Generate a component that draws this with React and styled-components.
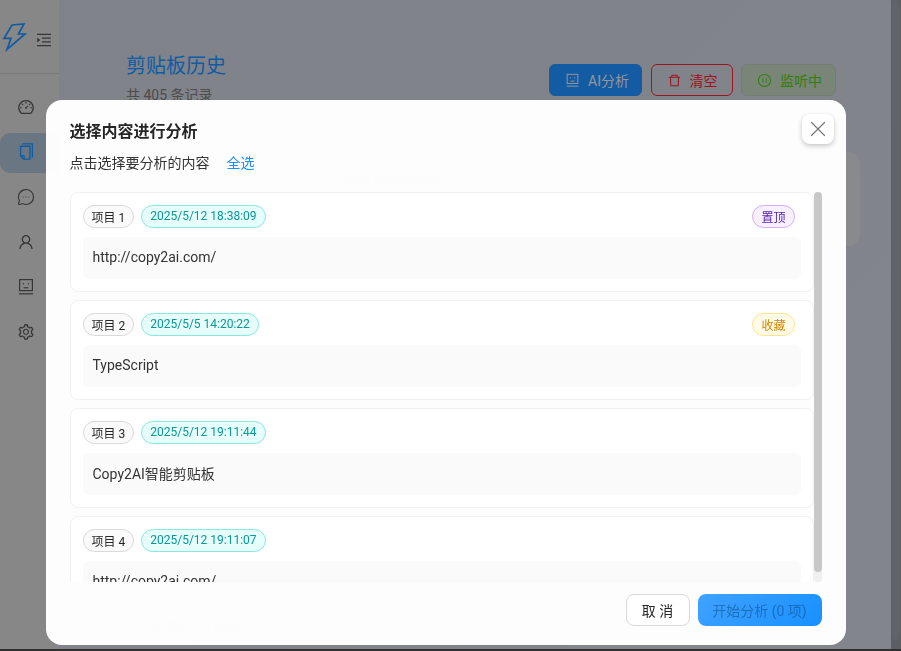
import React from 'react'
import styled, { createGlobalStyle } from 'styled-components'
import {
  AiOutlineMenuUnfold,
  AiOutlineDashboard,
  AiOutlineCopy,
  AiOutlineUser,
  AiOutlineSetting,
  AiOutlineDelete,
  AiOutlinePauseCircle,
  AiOutlineClockCircle,
} from 'react-icons/ai'
import { MessageCircleMore, X } from 'lucide-react'

const Global = createGlobalStyle`
  html, body { margin: 0; padding: 0; height: 100%; overflow: hidden; background: #4a4a4a; }
  body { font-family: Roboto, "Noto Sans CJK SC", sans-serif; }
  * { box-sizing: border-box; }
`

const FaceBox = ({ size = 18 }) => (
  <svg width={size} height={size} viewBox="0 0 18 18" fill="none" stroke="currentColor" strokeWidth="1.2">
    <rect x="2.6" y="1.6" width="12.8" height="11" />
    <path d="M2 15.8h14" />
    <path d="M6.6 9.8h4.8" />
    <circle cx="6.4" cy="5.8" r=".7" fill="currentColor" stroke="none" />
    <circle cx="11.6" cy="5.8" r=".7" fill="currentColor" stroke="none" />
  </svg>
)

const BoltLogo = () => (
  <svg width="28" height="30" viewBox="0 0 28 30" fill="none" stroke="currentColor" strokeWidth="1.7" strokeLinejoin="miter">
    <path d="M12 3 24 2 18.4 12H25L7 27.4 11 16.4H4Z" />
  </svg>
)

const navItems = [
  { key: 'dash', icon: <AiOutlineDashboard size={18} /> },
  { key: 'copy', icon: <AiOutlineCopy size={19} />, active: true },
  { key: 'msg', icon: <MessageCircleMore size={18} strokeWidth={1.5} /> },
  { key: 'user', icon: <AiOutlineUser size={18} /> },
  { key: 'bot', icon: <FaceBox size={18} /> },
  { key: 'set', icon: <AiOutlineSetting size={18} /> },
]

const records = [
  { id: 1, time: '2025/5/12 18:38:09', text: 'http://copy2ai.com/', flag: '置顶', tone: 'purple' },
  { id: 2, time: '2025/5/5 14:20:22', text: 'TypeScript', flag: '收藏', tone: 'gold' },
  { id: 3, time: '2025/5/12 19:11:44', text: 'Copy2AI智能剪贴板' },
  { id: 4, time: '2025/5/12 19:11:07', text: 'http://copy2ai.com/' },
]

const App = () => {
  return (
    <>
      <Global />
      <Shell>
        <Sidebar>
          <Brand>
            <Bolt><BoltLogo /></Bolt>
            <Fold><AiOutlineMenuUnfold size={18} /></Fold>
          </Brand>
          <Nav>
            {navItems.map((item) => (
              <NavItem key={item.key} $active={item.active}>{item.icon}</NavItem>
            ))}
          </Nav>
        </Sidebar>
        <Main>
          <TopBar>
            <div>
              <PageTitle>剪贴板历史</PageTitle>
              <PageSub>共 405 条记录</PageSub>
            </div>
            <Actions>
              <ActionButton $tone="primary"><FaceBox size={15} />AI分析</ActionButton>
              <ActionButton $tone="danger"><AiOutlineDelete size={15} />清空</ActionButton>
              <ActionButton $tone="success"><AiOutlinePauseCircle size={15} />监听中</ActionButton>
            </Actions>
          </TopBar>
          <SearchCard>搜索剪贴板内容...</SearchCard>
          <HistoryCard>
            <AiOutlineClockCircle size={13} />
            05.12 18:43
          </HistoryCard>
        </Main>
        <PageBar><PageThumb /></PageBar>
      </Shell>
      <Mask>
        <Modal>
          <CloseButton><X size={26} strokeWidth={1.1} /></CloseButton>
          <ModalTitle>选择内容进行分析</ModalTitle>
          <Hint>
            点击选择要分析的内容
            <SelectAll>全选</SelectAll>
          </Hint>
          <ListWrap>
            <List>
              {records.map((r) => (
                <Item key={r.id}>
                  <ItemHead>
                    <Tag>项目 {r.id}</Tag>
                    <Tag $tone="cyan">{r.time}</Tag>
                    {r.flag && <FlagTag $tone={r.tone}>{r.flag}</FlagTag>}
                  </ItemHead>
                  <ItemBody>{r.text}</ItemBody>
                </Item>
              ))}
            </List>
            <ListBar><ListThumb /></ListBar>
          </ListWrap>
          <Footer>
            <CancelButton>取 消</CancelButton>
            <StartButton>开始分析 (0 项)</StartButton>
          </Footer>
        </Modal>
      </Mask>
    </>
  )
}

export default App

const Shell = styled.div`
  height: 649px;
  display: flex;
  overflow: hidden;
  background: linear-gradient(135deg, #c8ccd6, #ccd1db);
`
const PageBar = styled.div`
  width: 10px;
  flex-shrink: 0;
  background: #8f949c;
  padding: 0 1px;
`
const PageThumb = styled.div`
  height: 640px;
  border-radius: 4px;
  background: #979ba3;
`
const Sidebar = styled.aside`
  width: 59px;
  flex-shrink: 0;
  background: #d3d3d3;
`
const Brand = styled.div`
  height: 74px;
  border-bottom: 1px solid #bebebe;
  display: flex;
  align-items: center;
`
const Bolt = styled.span`
  display: flex;
  color: #1890ff;
`
const Fold = styled.span`
  display: flex;
  color: #555;
  margin: 6px 0 0 7px;
`
const Nav = styled.nav`
  display: flex;
  flex-direction: column;
  gap: 5px;
  padding-top: 13px;
`
const NavItem = styled.div`
  height: 40px;
  display: flex;
  align-items: center;
  padding-left: 17px;
  border-radius: 10px 0 0 10px;
  color: ${(p) => (p.$active ? '#1890ff' : '#555')};
  background: ${(p) => (p.$active ? '#a6b9cb' : 'transparent')};
  ${(p) => p.$active && 'margin: 1px 0 -1px; padding-bottom: 4px;'}
`
const Main = styled.main`
  flex: 1;
  min-width: 0;
  padding: 0 0 0 42px;
`
const TopBar = styled.header`
  display: flex;
  justify-content: space-between;
  align-items: flex-start;
  padding: 52px 55px 0 25px;
  height: 152px;
`
const PageTitle = styled.h1`
  margin: 0;
  font-size: 20px;
  line-height: 28px;
  font-weight: 400;
  color: #1890ff;
`
const PageSub = styled.div`
  margin-top: 5px;
  font-size: 14px;
  line-height: 20px;
  color: #777;
`
const Actions = styled.div`
  display: flex;
  gap: 8.5px;
  margin-top: 12px;
`
const toneStyles = {
  primary: 'background:#1e90ff;color:#e4e8ee;border-color:#1e90ff;padding-right:12px;',
  danger: 'background:transparent;color:#f5222d;border-color:#f5222d;padding-right:14px;',
  success: 'background:#bcd0bb;color:#52c41a;border-color:#b4c6b4;',
}
const ActionButton = styled.button`
  height: 32px;
  padding: 0 13px 0 15px;
  display: flex;
  align-items: center;
  gap: 8px;
  border: 1px solid;
  border-radius: 6px;
  font: 400 14px Roboto, "Noto Sans CJK SC", sans-serif;
  ${(p) => toneStyles[p.$tone]}
`
const SearchCard = styled.div`
  width: 759px;
  height: 94px;
  padding: 18px 0 0 244px;
  border-radius: 12px;
  background: #d5d8df;
  font-size: 14px;
  color: #888;
`
const HistoryCard = styled.div`
  display: flex;
  align-items: flex-end;
  gap: 6px;
  width: 759px;
  height: 380px;
  margin-top: 8px;
  padding: 0 0 0 46px;
  font-size: 14px;
  color: #888;
`
const Mask = styled.div`
  position: fixed;
  inset: 0;
  padding: 100px 10px 0 0;
  display: flex;
  justify-content: center;
  align-items: flex-start;
  background: rgba(0, 0, 0, 0.36);
  backdrop-filter: blur(0.4px);
`
const Modal = styled.div`
  position: relative;
  width: 800px;
  height: 545px;
  padding: 20px 24px 0;
  border-radius: 16px;
  background: rgba(255, 255, 255, 0.98);
`
const CloseButton = styled.button`
  position: absolute;
  top: 14px;
  right: 12px;
  width: 32px;
  height: 30px;
  padding: 0;
  display: flex;
  align-items: center;
  justify-content: center;
  border: none;
  border-radius: 8px;
  background: #fff;
  color: #777;
  box-shadow: 0 2px 5px rgba(0, 0, 0, 0.22);
`
const ModalTitle = styled.h2`
  margin: 0;
  font-size: 16px;
  line-height: 24px;
  font-weight: 600;
  color: #262626;
`
const Hint = styled.div`
  margin-top: 8px;
  font-size: 14px;
  line-height: 22px;
  color: #333;
`
const SelectAll = styled.a`
  margin-left: 17px;
  color: #1890ff;
`
const ListWrap = styled.div`
  margin-top: 18px;
  height: 390px;
  display: flex;
`
const List = styled.div`
  flex: 1;
  min-width: 0;
  display: flex;
  flex-direction: column;
  gap: 8px;
  overflow: hidden;
`
const ListBar = styled.div`
  width: 8px;
  flex-shrink: 0;
  border-radius: 4px;
  background: #f0f0f0;
`
const ListThumb = styled.div`
  height: 380px;
  border-radius: 4px;
  background: #c8c8c8;
`
const Item = styled.div`
  flex-shrink: 0;
  height: 100px;
  padding: 12px;
  border: 1px solid #f0f0f0;
  border-radius: 8px;
  background: #fff;
`
const tagTones = {
  cyan: 'background:#e6fffb;border-color:#87e8de;color:#08979c;',
  purple: 'background:#f9f0ff;border-color:#d3adf7;color:#531dab;',
  gold: 'background:#fffbe6;border-color:#ffe58f;color:#d48806;',
}
const ItemHead = styled.div`
  display: flex;
  gap: 7px;
`
const Tag = styled.span`
  height: 23px;
  padding: 0 8px 1px;
  display: flex;
  align-items: center;
  border: 1px solid #d9d9d9;
  border-radius: 12px;
  background: #fafafa;
  font-size: 12px;
  color: #262626;
  ${(p) => tagTones[p.$tone]}
`
const FlagTag = styled(Tag)`
  margin: 0 6px 0 auto;
`
const ItemBody = styled.div`
  margin-top: 9px;
  height: 42px;
  padding: 0 10px 2px;
  display: flex;
  align-items: center;
  border-radius: 6px;
  background: #fafafa;
  font-size: 14px;
  color: #333;
`
const Footer = styled.div`
  display: flex;
  justify-content: flex-end;
  gap: 8px;
  margin-top: 12px;
`
const CancelButton = styled.button`
  width: 64px;
  height: 32px;
  border: 1px solid #d9d9d9;
  border-radius: 8px;
  background: #fff;
  font: 14px Roboto, "Noto Sans CJK SC", sans-serif;
  color: #262626;
`
const StartButton = styled.button`
  width: 124px;
  height: 32px;
  border: none;
  border-radius: 8px;
  background: linear-gradient(135deg, #40a2ff, #1890ff);
  font: 14px Roboto, "Noto Sans CJK SC", sans-serif;
  color: rgba(0, 60, 110, 0.45);
`
